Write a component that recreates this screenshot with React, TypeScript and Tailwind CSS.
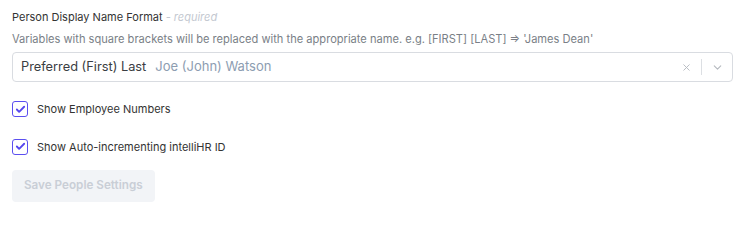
import { Check, X, ChevronDown } from "lucide-react";

export default function App() {
  return (
    <div className="w-[740px] h-[211px] bg-white pl-3 pr-[7px] pt-[9px] font-['Inter',sans-serif] text-[#333]">
      {/* Name format field */}
      <div className="text-[11px] leading-[16px]">
        Person Display Name Format <span className="italic text-[#c4c9d1]">- required</span>
      </div>
      <div className="mt-[6px] text-[11.1px] leading-[16px] text-[#7a7f87]">
        Variables with square brackets will be replaced with the appropriate name. e.g. [FIRST] [LAST] ⇒ 'James Dean'
      </div>
      <div className="mt-[5px] flex h-[30px] items-center rounded-[4px] border border-[#d9dce1] pl-[8px] pr-[8px]">
        <span className="text-[12.8px] text-[#3a3d42]">Preferred (First) Last</span>
        <span className="ml-[9px] text-[13px] text-[#8d9db1]">Joe (John) Watson</span>
        <div className="ml-auto flex items-center">
          <X className="h-[11px] w-[11px] text-[#b5b9bf]" strokeWidth={2} />
          <div className="ml-[9px] mr-[9px] h-[16px] w-px bg-[#dcdfe3]" />
          <ChevronDown className="h-[13px] w-[13px] text-[#b5b9bf]" strokeWidth={2} />
        </div>
      </div>

      {/* Checkboxes */}
      <div className="mt-[19px] flex flex-col gap-[21px]">
        <label className="flex items-center gap-[9px] text-[11px] text-[#333]">
          <span className="flex h-[16px] w-[16px] items-center justify-center rounded-[3px] border-[1.5px] border-[#5b4ff0]">
            <Check className="h-[11px] w-[11px] text-[#5546ee]" strokeWidth={4} />
          </span>
          Show Employee Numbers
        </label>
        <label className="flex items-center gap-[9px] text-[11px] text-[#333]">
          <span className="flex h-[16px] w-[16px] items-center justify-center rounded-[3px] border-[1.5px] border-[#5b4ff0]">
            <Check className="h-[11px] w-[11px] text-[#5546ee]" strokeWidth={4} />
          </span>
          Show Auto-incrementing intelliHR ID
        </label>
      </div>

      <button
        disabled
        className="mt-[15px] h-[32px] rounded-[4px] bg-[#f2f4f7] px-[12px] text-[11.7px] font-semibold text-[#c9ced6]"
      >
        Save People Settings
      </button>
    </div>
  );
}
